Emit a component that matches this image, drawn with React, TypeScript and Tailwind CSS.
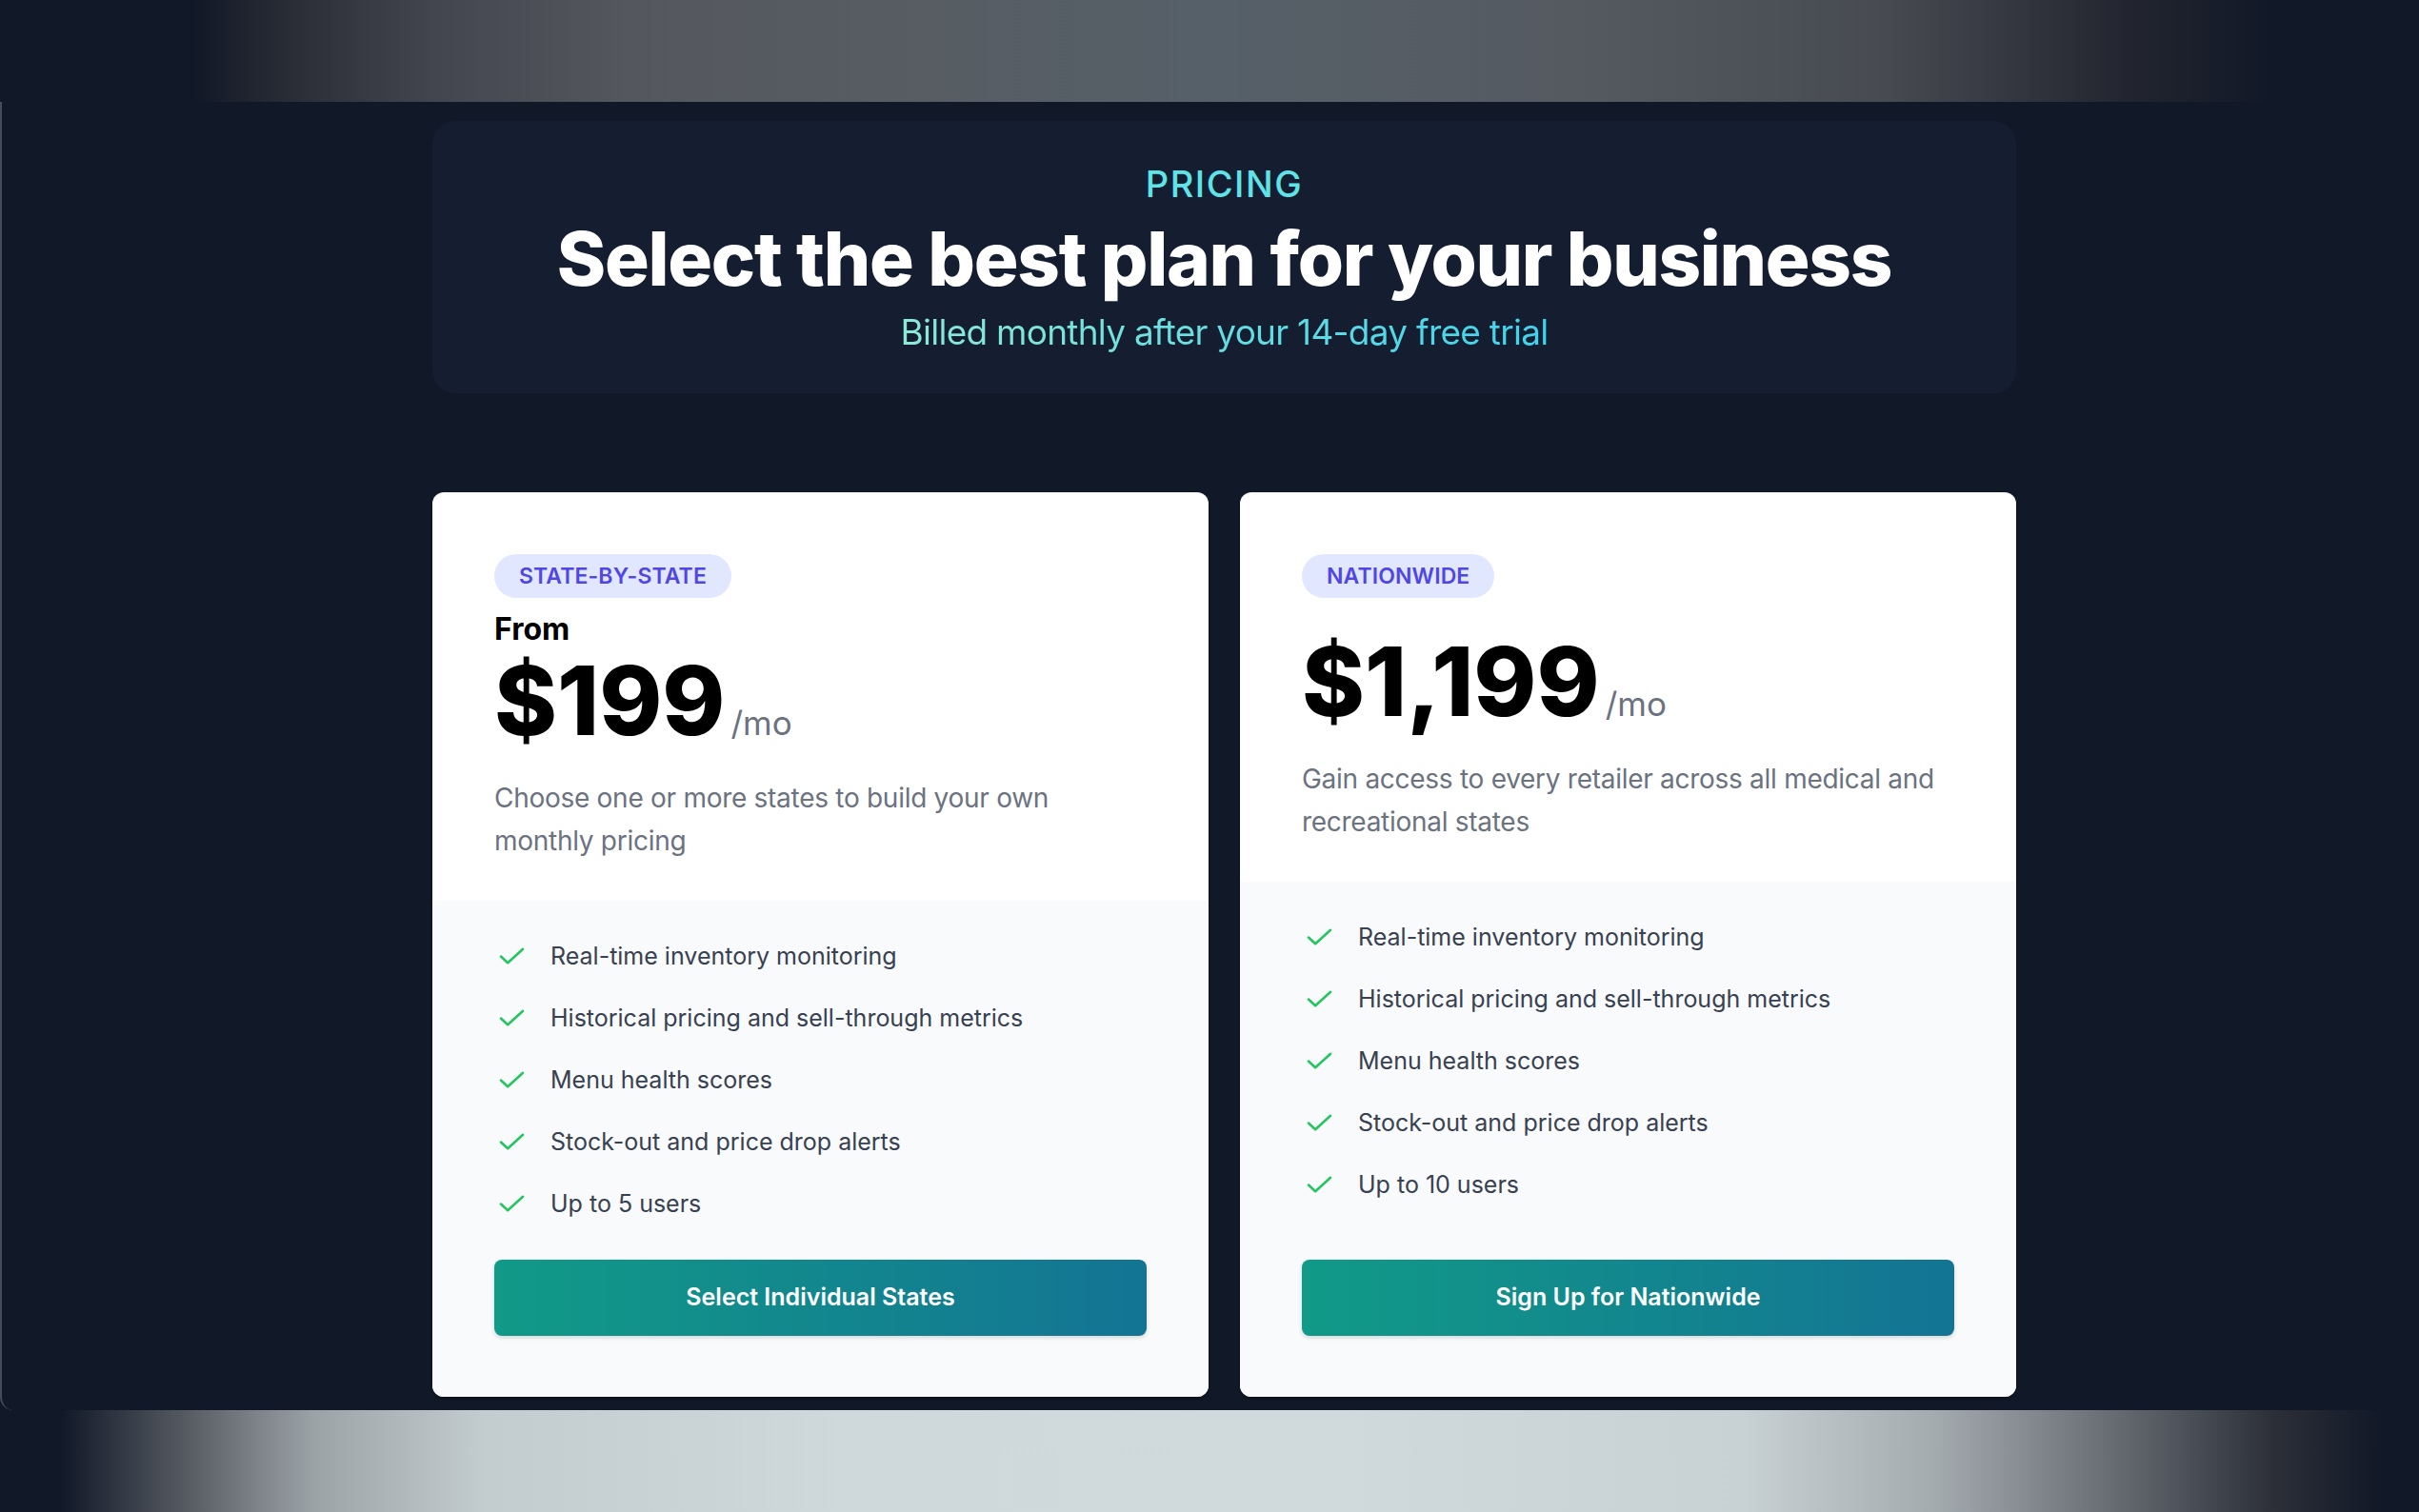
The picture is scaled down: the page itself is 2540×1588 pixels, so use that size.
const plans = [
  {
    badge: "STATE-BY-STATE",
    from: true,
    price: "$199",
    desc: "Choose one or more states to build your own monthly pricing",
    features: [
      "Real-time inventory monitoring",
      "Historical pricing and sell-through metrics",
      "Menu health scores",
      "Stock-out and price drop alerts",
      "Up to 5 users",
    ],
    cta: "Select Individual States",
  },
  {
    badge: "NATIONWIDE",
    from: false,
    price: "$1,199",
    desc: "Gain access to every retailer across all medical and recreational states",
    features: [
      "Real-time inventory monitoring",
      "Historical pricing and sell-through metrics",
      "Menu health scores",
      "Stock-out and price drop alerts",
      "Up to 10 users",
    ],
    cta: "Sign Up for Nationwide",
  },
];

function Check() {
  return (
    <svg
      viewBox="0 0 28 20"
      className="ml-[5px] w-[27px] h-[20px] shrink-0"
      fill="none"
      stroke="#22c55e"
      strokeWidth="2.6"
      strokeLinecap="round"
      strokeLinejoin="round"
    >
      <path d="M2 10.5 9.5 17.5 26 2.5" />
    </svg>
  );
}

function PlanCard({ plan }: { plan: (typeof plans)[number] }) {
  return (
    <div className="flex flex-col bg-white rounded-[12px] overflow-hidden shadow-[0_2px_3px_rgba(0,0,0,0.35)]">
      <div className="px-[65px] pt-[65px] pb-[40px]">
        <span className="inline-flex items-center h-[46px] px-[26px] rounded-full bg-[#e0e7ff] text-[#4f46e5] text-[23px] font-semibold tracking-[0.005em]">
          {plan.badge}
        </span>
        {plan.from && (
          <div className="mt-[16px] text-[32px] leading-[34px] font-bold text-black">From</div>
        )}
        <div className={`flex items-baseline ${plan.from ? "mt-[8px]" : "mt-[38px]"}`}>
          <span className="text-[100px] leading-none font-extrabold text-black">{plan.price}</span>
          <span className="ml-[6px] text-[35px] text-[#6b7280]">/mo</span>
        </div>
        <p className="mt-[30px] text-[28px] leading-[45px] tracking-[-0.01em] text-[#6b7280]">{plan.desc}</p>
      </div>
      <div className="flex-1 flex flex-col bg-[#f9fafb] px-[65px] pt-[42px] pb-[64px]">
        <ul className="flex flex-col gap-[33px] mb-[43px]">
          {plan.features.map((f) => (
            <li key={f} className="flex items-center gap-[27px] text-[25px] leading-[32px] text-[#374151]">
              <Check />
              {f}
            </li>
          ))}
        </ul>
        <button className="mt-auto h-[80px] w-full rounded-[8px] bg-[linear-gradient(90deg,#119a87,#137494)] text-white text-[25px] font-semibold shadow-[0_2px_4px_rgba(0,0,0,0.15)]">
          {plan.cta}
        </button>
      </div>
    </div>
  );
}

export default function App() {
  return (
    <div className="w-[2540px] h-[1588px] flex flex-col overflow-hidden bg-[#111827] font-['Inter','Noto_Sans',sans-serif]">
      <div className="h-[107px] shrink-0 bg-[linear-gradient(90deg,#111827_0%,#111827_8%,#2a2d36_12%,#43464e_18%,#54575e_26%,#575c62_36%,#566068_50%,#555a61_65%,#474a51_78%,#22252f_88%,#111827_94%,#111827_100%)]" />

      <main className="flex-1 border-l-2 border-[#444c5a] rounded-bl-[14px]">
        <div className="ml-[452px] w-[1663px] pt-[20px]">
          <section className="rounded-[24px] bg-[#151e31] pt-[43px] pb-[42px] text-center">
            <div className="text-[38px] leading-[46px] font-medium tracking-[0.04em] text-[#5ee3e8]">PRICING</div>
            <h1 className="mt-[13px] text-[78px] leading-[86px] font-extrabold tracking-[-0.017em] text-white">
              Select the best plan for your business
            </h1>
            <p className="mt-[12px] text-[37px] leading-[44px] tracking-[-0.02em]">
              <span className="bg-[linear-gradient(90deg,#8ce9d6,#3fd3ec)] bg-clip-text text-transparent">
                Billed monthly after your 14-day free trial
              </span>
            </p>
          </section>

          <div className="mt-[104px] grid grid-cols-2 gap-[33px]">
            {plans.map((p) => (
              <PlanCard key={p.badge} plan={p} />
            ))}
          </div>
        </div>
      </main>

      <div className="h-[107px] shrink-0 bg-[linear-gradient(90deg,#111827_0%,#111827_2.5%,#5a5f66_8%,#9ca3a7_13%,#c3cccf_20%,#cfd9db_35%,#d0d9db_55%,#c8d1d4_72%,#a4abaf_80%,#6a6f76_87%,#2c2f38_94%,#111827_98.5%,#111827_100%)]" />
    </div>
  );
}
